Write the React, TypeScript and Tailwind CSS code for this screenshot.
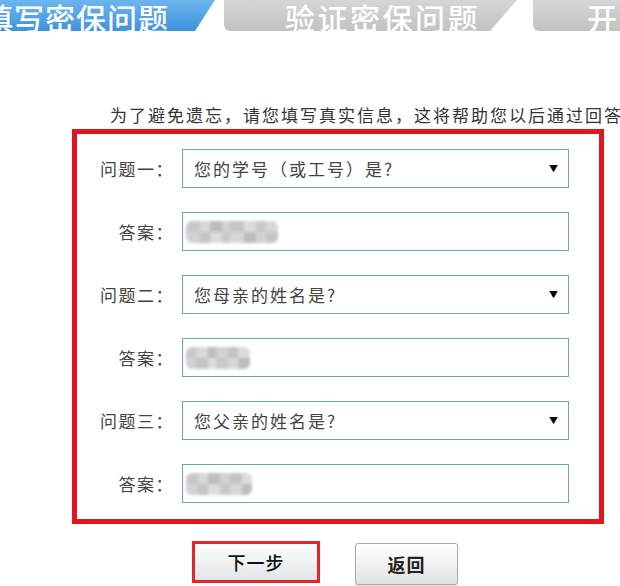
const rows = [
  { label: "问题一：", kind: "select", value: "您的学号（或工号）是?" },
  { label: "答案：", kind: "input", blur: [14, 10, 12, 8, 14, 12, 10, 12] },
  { label: "问题二：", kind: "select", value: "您母亲的姓名是?" },
  { label: "答案：", kind: "input", blur: [10, 12, 8, 12, 10, 12] },
  { label: "问题三：", kind: "select", value: "您父亲的姓名是?" },
  { label: "答案：", kind: "input", blur: [12, 10, 12, 10, 12, 10] },
];

const shades = ["bg-[#c9c9c9]", "bg-[#d8d8d8]", "bg-[#bdbdbd]", "bg-[#d2d2d2]", "bg-[#c4c4c4]", "bg-[#dcdcdc]"];

function Blurred({ widths }: { widths: number[] }) {
  return (
    <div className="ml-[3px] flex h-[22px] overflow-hidden rounded-[6px] blur-[1.5px]">
      {widths.map((w, i) => (
        <div key={i} className="flex flex-col" style={{ width: w }}>
          <div className={`h-[11px] ${shades[i % shades.length]}`} />
          <div className={`h-[11px] ${shades[(i + 3) % shades.length]}`} />
        </div>
      ))}
    </div>
  );
}

export default function App() {
  return (
    <div className="relative h-[586px] w-[620px] overflow-hidden bg-white font-['Noto_Sans_CJK_SC','Noto_Sans',sans-serif] text-[#333]">
      {/* step tabs */}
      <div className="flex h-[31px]">
        <div className="ml-[-20px] flex w-[235px] shrink-0 items-center bg-gradient-to-b from-[#6cb6ee] to-[#3f93dc] pl-[3px] pt-[2px] text-[30px] font-medium leading-none tracking-[1px] text-white [clip-path:polygon(0_0,100%_0,calc(100%-20px)_100%,0_100%)]">
          填写密保问题
        </div>
        <div className="ml-[9px] flex w-[293px] shrink-0 items-center rounded-bl-[6px] bg-gradient-to-b from-[#d6d6d6] to-[#c2c2c2] pl-[61px] pt-[2px] text-[30px] font-medium leading-none tracking-[2.5px] text-white [clip-path:polygon(0_0,100%_0,calc(100%-27px)_100%,0_100%)]">
          验证密保问题
        </div>
        <div className="ml-[16px] flex w-[120px] shrink-0 items-center rounded-bl-[6px] bg-gradient-to-b from-[#d6d6d6] to-[#c2c2c2] pl-[54px] pt-[2px] text-[30px] font-medium leading-none tracking-[2.5px] text-white">
          开始
        </div>
      </div>

      <p className="mt-[74px] whitespace-nowrap pl-[110px] text-[17px] leading-[20px] tracking-[2px] text-[#333]">
        为了避免遗忘，请您填写真实信息，这将帮助您以后通过回答问题找回密码。
      </p>

      {/* red highlight box */}
      <div className="ml-[72px] mt-[4px] flex h-[395px] w-[532px] flex-col gap-[24px] border-[5px] border-[#e3141e] pt-[15px]">
        {rows.map((row, i) => (
          <div key={i} className="flex items-center">
            <div className="w-[97px] text-right text-[17px] tracking-[1.5px] text-[#444]">{row.label}</div>
            <div className="ml-[8px] flex h-[39px] w-[387px] items-center border-[1.5px] border-[#65a9ba] bg-white">
              {row.kind === "select" ? (
                <>
                  <span className="flex-1 pl-[11px] text-[17px] tracking-[2px] text-[#444]">{row.value}</span>
                  <span className="pr-[10px] text-[9px] text-black">▼</span>
                </>
              ) : (
                <Blurred widths={row.blur ?? []} />
              )}
            </div>
          </div>
        ))}
      </div>

      {/* actions */}
      <div className="mt-[17px] flex items-start">
        <button
          type="button"
          className="ml-[192px] h-[42px] w-[128px] border-[3px] border-[#e0262b] bg-gradient-to-b from-[#fbfcfd] to-[#e3e6ea] text-[18px] font-medium tracking-[1px] text-[#111]"
        >
          下一步
        </button>
        <button
          type="button"
          className="ml-[35px] mt-[2px] h-[42px] w-[103px] rounded-[3px] border border-[#a9a9a9] bg-gradient-to-b from-white to-[#e2e2e2] text-[18px] font-bold tracking-[1px] text-[#222] shadow-[0_1px_1px_rgba(0,0,0,0.15)]"
        >
          返回
        </button>
      </div>
    </div>
  );
}
